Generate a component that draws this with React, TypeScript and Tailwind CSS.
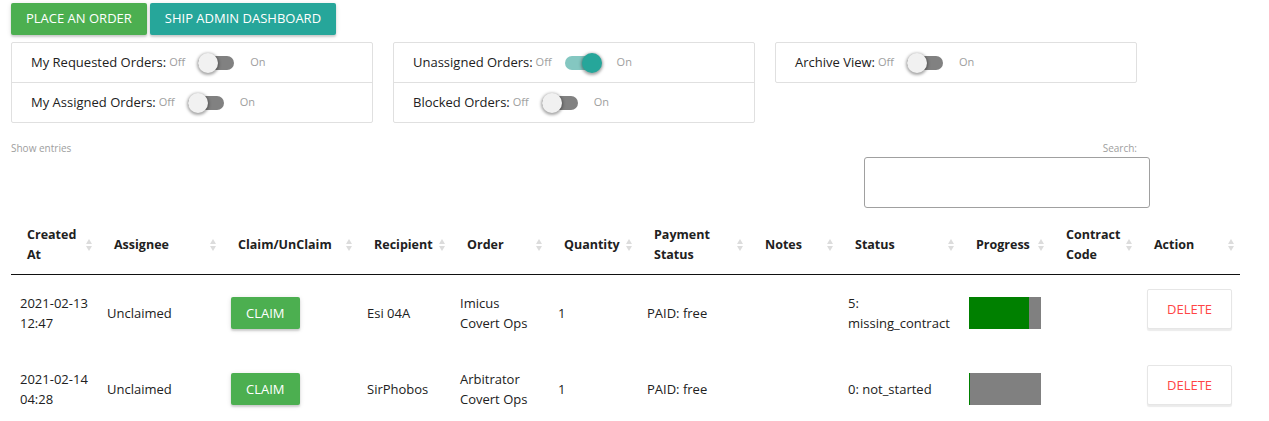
import React from "react";

const FONT = { fontFamily: '"Open Sans", "Noto Sans", sans-serif' };

function Switch({ on }: { on: boolean }) {
  return (
    <span className="relative ml-[13px] mr-4 inline-block h-[14px] w-9 rounded-full align-middle">
      <span className={`absolute inset-0 rounded-full ${on ? "bg-[#84c7c1]" : "bg-[#818181]"}`} />
      <span
        className={`absolute top-[-3px] h-5 w-5 rounded-full shadow-[0_1px_3px_1px_rgba(0,0,0,0.35)] ${
          on ? "left-[17px] bg-[#26a69a]" : "left-0 bg-[#f1f1f1]"
        }`}
      />
    </span>
  );
}

function FilterRow({ label, on, last }: { label: string; on: boolean; last?: boolean }) {
  return (
    <div className={`flex items-center pl-[19px] ${last ? "h-[39px]" : "h-10 border-b border-[#e0e0e0]"}`}>
      <span className="text-[13px] text-[#212121]">{label}</span>
      <span className="ml-[3px] text-[11px] text-[#9e9e9e]">Off</span>
      <Switch on={on} />
      <span className="text-[11px] text-[#9e9e9e]">On</span>
    </div>
  );
}

function SortIcon() {
  return (
    <svg width="6" height="12" viewBox="0 0 6 12" className="shrink-0">
      <polygon points="3,0 6,5 0,5" fill="#dcdcdc" />
      <polygon points="0,7 6,7 3,12" fill="#dcdcdc" />
    </svg>
  );
}

const cols = [
  { w: "w-[87px]", h: ["Created", "At"] },
  { w: "w-[124px]", h: ["Assignee"] },
  { w: "w-[136px]", h: ["Claim/UnClaim"] },
  { w: "w-[93px]", h: ["Recipient"] },
  { w: "w-[97px]", h: ["Order"] },
  { w: "w-[90px]", h: ["Quantity"] },
  { w: "w-[111px]", h: ["Payment", "Status"] },
  { w: "w-[90px]", h: ["Notes"] },
  { w: "w-[121px]", h: ["Status"] },
  { w: "w-[90px]", h: ["Progress"] },
  { w: "w-[88px]", h: ["Contract", "Code"] },
  { w: "w-[102px]", h: ["Action"] },
];

const rows = [
  {
    date: ["2021-02-13", "12:47"],
    recipient: "Esi 04A",
    order: ["Imicus", "Covert Ops"],
    status: ["5:", "missing_contract"],
    progress: 5 / 6,
  },
  {
    date: ["2021-02-14", "04:28"],
    recipient: "SirPhobos",
    order: ["Arbitrator", "Covert Ops"],
    status: ["0: not_started"],
    progress: 0,
  },
];

const btnShadow = "shadow-[0_2px_2px_0_rgba(0,0,0,0.14),0_1px_5px_0_rgba(0,0,0,0.12)]";

export default function App() {
  return (
    <div className="min-h-[421px] bg-white pl-[11px] pt-[3px]" style={FONT}>
      <div className="flex gap-[3px]">
        <button className={`h-8 rounded-[2px] bg-[#4caf50] px-[15px] text-[13px] uppercase text-white ${btnShadow}`}>
          Place an order
        </button>
        <button className={`h-8 rounded-[2px] bg-[#26a69a] px-[15px] text-[13px] uppercase text-white ${btnShadow}`}>
          Ship admin dashboard
        </button>
      </div>

      <div className="mt-[7px] flex items-start gap-5">
        <div className="w-[362px] rounded-[2px] border border-[#e0e0e0]">
          <FilterRow label="My Requested Orders:" on={false} />
          <FilterRow label="My Assigned Orders:" on={false} last />
        </div>
        <div className="w-[362px] rounded-[2px] border border-[#e0e0e0]">
          <FilterRow label="Unassigned Orders:" on={true} />
          <FilterRow label="Blocked Orders:" on={false} last />
        </div>
        <div className="w-[362px] rounded-[2px] border border-[#e0e0e0]">
          <FilterRow label="Archive View:" on={false} last />
        </div>
      </div>

      <div className="mt-[18px] flex w-[1229px] items-start justify-between">
        <div className="text-[10px] leading-[14px] text-[#9e9e9e]">Show entries</div>
        <div className="mr-[90px] flex w-[286px] flex-col">
          <div className="pr-[13px] text-right text-[10px] leading-[14px] text-[#9e9e9e]">Search:</div>
          <div className="mt-[2px] h-[51px] rounded-[3px] border border-[#a0a0a0]" />
        </div>
      </div>

      <table className="mt-[6px] w-[1229px] table-fixed border-separate border-spacing-0">
        <colgroup>
          {cols.map((c, i) => (
            <col key={i} className={c.w} />
          ))}
        </colgroup>
        <thead>
          <tr>
            {cols.map((c, i) => (
              <th key={i} className="border-b border-[#111] pb-[9px] pl-4 pr-[6px] pt-[11px] text-left align-middle">
                <div className="flex items-center justify-between">
                  <span className="text-[12.5px] font-bold leading-5 text-[#212121]">
                    {c.h.map((t, j) => (
                      <React.Fragment key={j}>
                        {j > 0 && <br />}
                        {t}
                      </React.Fragment>
                    ))}
                  </span>
                  <SortIcon />
                </div>
              </th>
            ))}
          </tr>
        </thead>
        <tbody className="text-[13px] leading-5 text-[#212121]">
          {rows.map((r, i) => (
            <tr key={i}>
              <td className="py-[18px] pl-[9px] align-middle">
                {r.date[0]}
                <br />
                {r.date[1]}
              </td>
              <td className="pl-[9px] align-middle">Unclaimed</td>
              <td className="pl-[9px] align-middle">
                <button className={`h-8 rounded-[2px] bg-[#4caf50] px-[15px] text-[13px] uppercase text-white ${btnShadow}`}>
                  Claim
                </button>
              </td>
              <td className="pl-[9px] align-middle">{r.recipient}</td>
              <td className="pl-[9px] align-middle">
                {r.order[0]}
                <br />
                {r.order[1]}
              </td>
              <td className="pl-[10px] align-middle">1</td>
              <td className="pl-[9px] align-middle">PAID: free</td>
              <td className="pl-[9px] align-middle"></td>
              <td className="pl-[9px] align-middle">
                {r.status.map((t, j) => (
                  <React.Fragment key={j}>
                    {j > 0 && <br />}
                    {t}
                  </React.Fragment>
                ))}
              </td>
              <td className="pl-[9px] align-middle">
                <div className="flex h-8 w-[72px] bg-[#808080]">
                  <div className="h-full min-w-px bg-[#008000]" style={{ width: `${r.progress * 100}%` }} />
                </div>
              </td>
              <td className="pl-[9px] align-middle"></td>
              <td className="pl-[9px] align-middle">
                <button className="mb-2 h-10 rounded-[2px] border border-[#e6e6e6] bg-white px-[19px] text-[13px] font-medium uppercase text-[#ff4545] shadow-[0_2px_1px_0_rgba(0,0,0,0.08)]">
                  Delete
                </button>
              </td>
            </tr>
          ))}
        </tbody>
      </table>
    </div>
  );
}
